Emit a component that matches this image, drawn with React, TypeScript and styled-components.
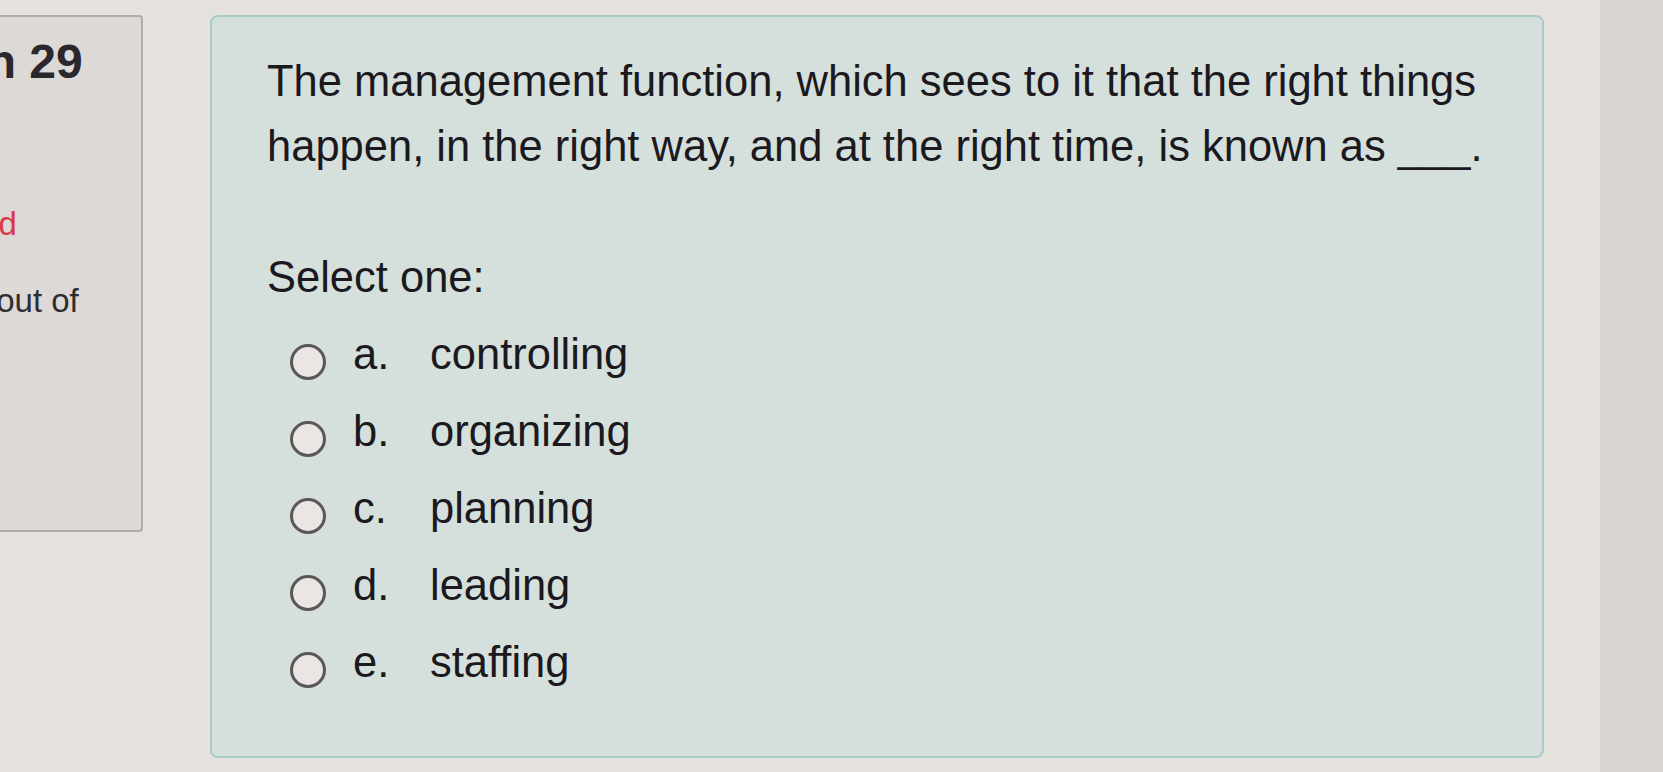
import React from "react";
import styled, { createGlobalStyle } from "styled-components";

const GlobalStyle = createGlobalStyle`
  html, body {
    margin: 0;
    padding: 0;
    background: #d9d6d2;
    overflow: hidden;
  }
  body {
    font-family: "Liberation Sans", Arial, sans-serif;
    color: #1b191e;
  }
`;

const options = [
  { letter: "a.", text: "controlling" },
  { letter: "b.", text: "organizing" },
  { letter: "c.", text: "planning" },
  { letter: "d.", text: "leading" },
  { letter: "e.", text: "staffing" },
];

export default function App() {
  return (
    <>
      <GlobalStyle />
      <Screen>
        <InfoPanel>
          <QuestionNo>
            Question <strong>29</strong>
          </QuestionNo>
          <State>Not yet answered</State>
          <Grade>
            Marked out of
            <br />
            1.00
          </Grade>
        </InfoPanel>
        <QuestionCard>
          <QuestionText>
            The management function, which sees to it that the right things
            happen, in the right way, and at the right time, is known as ___.
          </QuestionText>
          <Prompt>Select one:</Prompt>
          <AnswerList>
            {options.map((o) => (
              <Answer key={o.letter}>
                <Radio type="radio" name="q29" />
                <Letter>{o.letter}</Letter>
                <AnswerText>{o.text}</AnswerText>
              </Answer>
            ))}
          </AnswerList>
        </QuestionCard>
      </Screen>
    </>
  );
}

const Screen = styled.div`
  width: 1600px;
  height: 772px;
  background: #e5e2dd;
  display: flex;
  align-items: flex-start;
  padding-top: 15px;
  box-sizing: border-box;
`;

const InfoPanel = styled.div`
  flex: none;
  width: 403px;
  height: 517px;
  margin-left: -260px;
  box-sizing: border-box;
  padding-top: 17px;
  border: 2px solid #b2adad;
  border-radius: 4px;
  background: #dcd9d7;
  overflow: hidden;
  white-space: nowrap;
`;

const QuestionNo = styled.h3`
  margin: 0 0 0 66px;
  font-size: 48px;
  line-height: 56px;
  font-weight: 700;
  color: #2a282c;
`;

const State = styled.div`
  margin: 115px 0 0 18px;
  font-size: 33px;
  line-height: 38px;
  color: #d83a48;
`;

const Grade = styled.div`
  margin: 39px 0 0 135px;
  font-size: 33px;
  line-height: 38px;
  color: #2f2d31;
`;

const QuestionCard = styled.div`
  flex: none;
  width: 1334px;
  height: 743px;
  margin-left: 67px;
  box-sizing: border-box;
  padding: 32px 40px 0 55px;
  border: 2px solid #a8ccc5;
  border-radius: 8px;
  background: #d5e0dc;
  font-size: 43.5px;
`;

const QuestionText = styled.div`
  line-height: 65px;
`;

const Prompt = styled.div`
  margin-top: 66px;
  line-height: 65px;
`;

const AnswerList = styled.div`
  margin-top: 6px;
  padding-left: 23px;
  display: flex;
  flex-direction: column;
`;

const Answer = styled.label`
  display: flex;
  align-items: center;
  height: 77px;
  line-height: 77px;
`;

const Radio = styled.input`
  appearance: none;
  margin: 14px 27px 0 0;
  width: 36px;
  height: 36px;
  border-radius: 50%;
  border: 3px solid #5b5758;
  background: #ebe5e4;
  box-sizing: border-box;
  flex: none;
`;

const Letter = styled.span`
  width: 77px;
  flex: none;
`;

const AnswerText = styled.span``;
